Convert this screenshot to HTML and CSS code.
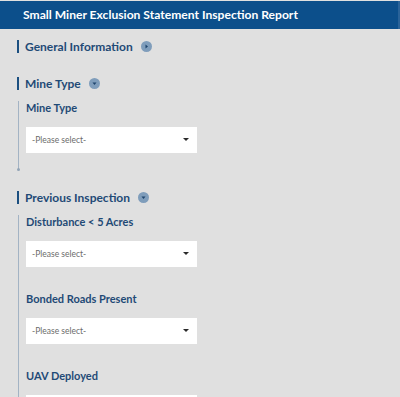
FILE: index.html
```html
<!DOCTYPE html>
<html lang="en">

<head>
    <meta charset="UTF-8">
    <meta name="viewport" content="width=device-width, initial-scale=1.0">
    <title>Inspection Report</title>
    <link rel="stylesheet" href="styles.css">
</head>

<body>
    <div class="header">Small Miner Exclusion Statement Inspection Report</div>

    <div class="form">
        <div class="section collapsed">
            <div class="section-title">
                General Information
                <svg class="toggle" width="11" height="11" viewBox="0 0 11 11">
                    <circle cx="5.5" cy="5.5" r="5.5" fill="#7f9dbb" />
                    <path d="M4.5 3.5 L7 5.5 L4.5 7.5 Z" fill="#1f456d" />
                </svg>
            </div>
        </div>

        <div class="section">
            <div class="section-title">
                Mine Type
                <svg class="toggle" width="11" height="11" viewBox="0 0 11 11">
                    <circle cx="5.5" cy="5.5" r="5.5" fill="#7f9dbb" />
                    <path d="M3.5 4.5 L7.5 4.5 L5.5 7 Z" fill="#1f456d" />
                </svg>
            </div>
            <div class="section-body">
                <div class="field">
                    <label class="field-label">Mine Type</label>
                    <div class="select">-Please select-<span class="caret"></span></div>
                </div>
            </div>
        </div>

        <div class="section">
            <div class="section-title">
                Previous Inspection
                <svg class="toggle" width="11" height="11" viewBox="0 0 11 11">
                    <circle cx="5.5" cy="5.5" r="5.5" fill="#7f9dbb" />
                    <path d="M3.5 4.5 L7.5 4.5 L5.5 7 Z" fill="#1f456d" />
                </svg>
            </div>
            <div class="section-body">
                <div class="field">
                    <label class="field-label">Disturbance &lt; 5 Acres</label>
                    <div class="select">-Please select-<span class="caret"></span></div>
                </div>
                <div class="field">
                    <label class="field-label">Bonded Roads Present</label>
                    <div class="select">-Please select-<span class="caret"></span></div>
                </div>
                <div class="field">
                    <label class="field-label">UAV Deployed</label>
                    <div class="select">-Please select-<span class="caret"></span></div>
                </div>
            </div>
        </div>
    </div>
</body>

</html>
```

FILE: styles.css
```css
* {
    margin: 0;
    padding: 0;
    box-sizing: border-box;
}

body {
    background: #e0e0e0;
    font-family: Lato, "Open Sans", sans-serif;
    overflow: hidden;
}

.header {
    margin-top: 1px;
    height: 28px;
    line-height: 28px;
    padding-left: 23px;
    background: #0c4f8b;
    color: #fff;
    font-size: 12.1px;
    font-weight: 700;
    border-right: 2px solid #2a6399;
}

.form {
    padding-left: 17px;
    display: flex;
    flex-direction: column;
}

.section {
    margin-top: 11px;
}

.section + .section {
    margin-top: 24px;
}

.section + .section + .section {
    margin-top: 21px;
}

.section-title {
    display: flex;
    align-items: center;
    gap: 8px;
    height: 13px;
    border-left: 2px solid #1b4f80;
    padding-left: 6px;
    font-size: 12px;
    font-weight: 700;
    color: #1f4a76;
}

.section-body {
    position: relative;
    margin-left: 1px;
    border-left: 1px solid #a3b3c4;
    padding: 0 0 17px 7px;
}

/* little dot at the end of the line */
.section-body::after {
    content: "";
    position: absolute;
    left: -2px;
    bottom: -1px;
    width: 3px;
    height: 3px;
    border-radius: 50%;
    background: #93a4b6;
}

.field {
    display: flex;
    flex-direction: column;
    margin-top: 25px;
}

.field:first-child {
    margin-top: 11px;
}

.field-label {
    font-size: 11px;
    line-height: 14px;
    font-weight: 700;
    color: #1f4a76;
    margin-bottom: 12px;
}

.select {
    position: relative;
    width: 171px;
    height: 26px;
    line-height: 26px;
    background: #fff;
    padding-left: 6px;
    font-size: 8.5px;
    color: #6b6b6b;
}

.caret {
    position: absolute;
    right: 8px;
    top: 11px;
    border-left: 3px solid transparent;
    border-right: 3px solid transparent;
    border-top: 3px solid #2a2a2a;
}
```
